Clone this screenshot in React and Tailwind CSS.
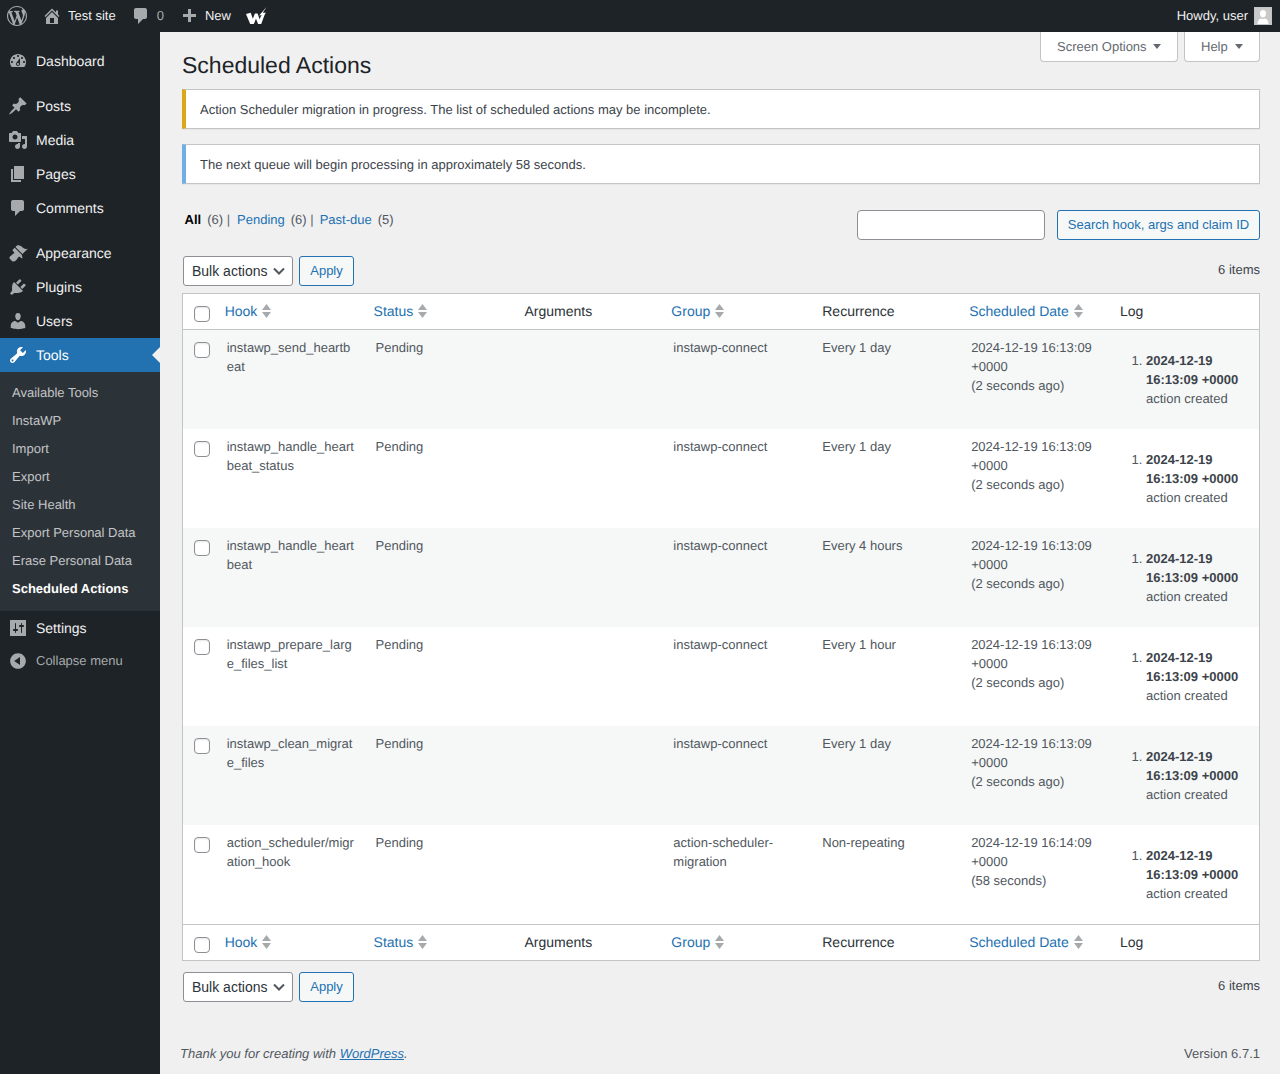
import React from "react";

const P = {
  wp: "M20 10c0-5.51-4.49-10-10-10C4.48 0 0 4.49 0 10c0 5.52 4.48 10 10 10 5.51 0 10-4.48 10-10zM7.78 15.37L4.37 6.22c.55-.02 1.17-.08 1.17-.08.5-.06.44-1.13-.06-1.11 0 0-1.45.11-2.37.11-.18 0-.37 0-.58-.01C4.12 2.69 6.87 1.11 10 1.11c2.33 0 4.45.87 6.05 2.34-.68-.11-1.65.39-1.65 1.58 0 .74.45 1.36.9 2.1.35.61.55 1.36.55 2.46 0 1.49-1.4 5-1.4 5l-3.03-8.37c.54-.02.82-.17.82-.17.5-.05.44-1.25-.06-1.22 0 0-1.44.12-2.38.12-.87 0-2.33-.12-2.33-.12-.5-.03-.56 1.2-.06 1.22l.92.08 1.26 3.41zM17.41 10c.24-.64.74-1.87.43-4.25.7 1.29 1.05 2.71 1.05 4.25 0 3.29-1.73 6.24-4.4 7.78.97-2.59 1.94-5.2 2.92-7.78zM6.1 18.09C3.12 16.65 1.11 13.53 1.11 10c0-1.3.23-2.48.72-3.59C3.25 10.3 4.67 14.2 6.1 18.09zm4.03-6.63l2.58 6.98c-.86.29-1.76.45-2.71.45-.79 0-1.57-.11-2.29-.33.81-2.38 1.62-4.74 2.42-7.1z",
  home: "M16 8.5l1.53 1.53-1.06 1.06L10 4.62l-6.47 6.47-1.06-1.06L10 2.5l4 4v-2h2v4zm-6-2.46l6 5.99V18H4v-5.97zM12 17v-5H8v5h4z",
  comment: "M5 2h9c1.1 0 2 .9 2 2v7c0 1.1-.9 2-2 2h-2l-5 5v-5H5c-1.1 0-2-.9-2-2V4c0-1.1.9-2 2-2z",
  plus: "M17 7v3h-5v5H9v-5H4V7h5V2h3v5h5z",
  dashboard: "M3.76 16h12.48c1.1-1.37 1.76-3.11 1.76-5 0-4.42-3.58-8-8-8s-8 3.58-8 8c0 1.89.66 3.63 1.76 5zM10 4c.55 0 1 .45 1 1s-.45 1-1 1-1-.45-1-1 .45-1 1-1zM6 6c.55 0 1 .45 1 1s-.45 1-1 1-1-.45-1-1 .45-1 1-1zm8 0c.55 0 1 .45 1 1s-.45 1-1 1-1-.45-1-1 .45-1 1-1zm-5.37 5.55L12 7v6c0 1.1-.9 2-2 2s-2-.9-2-2c0-.57.24-1.08.63-1.45zM4 10c.55 0 1 .45 1 1s-.45 1-1 1-1-.45-1-1 .45-1 1-1zm12 0c.55 0 1 .45 1 1s-.45 1-1 1-1-.45-1-1 .45-1 1-1zm-5 3c0-.55-.45-1-1-1s-1 .45-1 1 .45 1 1 1 1-.45 1-1z",
  posts: "M10.44 3.02l1.82-1.82 6.36 6.35-1.83 1.82c-1.05-.68-2.48-.57-3.41.36l-.75.75c-.92.93-1.04 2.35-.35 3.41l-1.83 1.82-2.41-2.41-2.8 2.79c-.42.42-3.38 2.71-3.8 2.29s1.86-3.39 2.28-3.81l2.79-2.79L4.1 9.36l1.83-1.82c1.05.69 2.48.57 3.4-.36l.75-.75c.93-.92 1.05-2.35.36-3.41z",
  media: "M13 11V4c0-.55-.45-1-1-1h-1.67L9 1H5L3.67 3H2c-.55 0-1 .45-1 1v7c0 .55.45 1 1 1h10c.55 0 1-.45 1-1zM7 4.5c1.38 0 2.5 1.12 2.5 2.5S8.38 9.5 7 9.5 4.5 8.38 4.5 7 5.62 4.5 7 4.5zM14 6h5v10.5c0 1.38-1.12 2.5-2.5 2.5S14 17.88 14 16.5s1.12-2.5 2.5-2.5c.17 0 .34.02.5.05V9h-3V6zm-4 8.05V13h2v3.5c0 1.38-1.12 2.5-2.5 2.5S7 17.88 7 16.5 8.12 14 9.5 14c.17 0 .34.02.5.05z",
  pages: "M6 15V2h10v13H6zm-1 1h8v2H3V5h2v11z",
  appearance: "M14.48 11.06L7.41 3.99l1.5-1.5c.5-.56 2.3-.47 3.51.32 1.21.8 1.43 1.28 2.91 2.1 1.18.64 2.45 1.26 4.45.85zm-.71.71L6.7 4.7 4.93 6.47c-.39.39-.39 1.02 0 1.41l1.06 1.06c.39.39.39 1.03 0 1.42-.6.6-1.43 1.11-2.21 1.69-.35.26-.7.53-1.01.84C1.43 13.23.99 15 2.01 16.01l1.98 1.98c1.01 1.02 2.78.58 4.1-.76.3-.3.58-.66.84-1.01.58-.78 1.09-1.61 1.69-2.21.39-.39 1.03-.39 1.42 0l1.06 1.06c.39.39 1.02.39 1.41 0z",
  plugins: "M13.11 4.36L9.87 7.6 8 5.73l3.24-3.24c.35-.34 1.05-.2 1.56.32.52.51.66 1.21.31 1.55zm-8 1.77l.91-1.12 9.01 9.01-1.19.84c-.71.71-2.63 1.16-3.82 1.16H6.14L4.9 17.26c-.59.59-1.54.59-2.12 0-.59-.58-.59-1.53 0-2.12l1.24-1.24v-3.88c0-1.13.4-3.19 1.09-3.89zm7.26 3.97l3.24-3.24c.34-.35 1.04-.21 1.55.31.52.51.66 1.21.31 1.55l-3.24 3.25z",
  users: "M10 9.25c-2.27 0-2.73-3.44-2.73-3.44C7 4.02 7.82 2 9.97 2c2.16 0 2.98 2.02 2.71 3.81 0 0-.41 3.44-2.68 3.44zm0 2.57L12.72 10c2.39 0 4.52 2.33 4.52 4.53v2.49s-3.65 1.13-7.24 1.13c-3.65 0-7.24-1.13-7.24-1.13v-2.49c0-2.25 1.94-4.48 4.47-4.48z",
  tools: "M16.68 9.77c-1.34 1.34-3.3 1.67-4.95.99l-5.41 6.52c-.99.99-2.59.99-3.58 0s-.99-2.59 0-3.57l6.52-5.42c-.68-1.65-.35-3.61.99-4.95 1.28-1.28 3.12-1.62 4.72-1.06l-2.89 2.89 2.82 2.82 2.86-2.87c.53 1.58.18 3.39-1.08 4.65zM3.81 16.21c.4.39 1.04.39 1.43 0 .4-.4.4-1.04 0-1.43-.39-.4-1.03-.4-1.43 0-.39.39-.39 1.03 0 1.43z",
  settings: "M18 18V2H2v16zM8 11h1c.55 0 1 .45 1 1s-.45 1-1 1H8v1.5c0 .28-.22.5-.5.5s-.5-.22-.5-.5V13H6c-.55 0-1-.45-1-1s.45-1 1-1h1V5.5c0-.28.22-.5.5-.5s.5.22.5.5V11zm5-2h-1c-.55 0-1-.45-1-1s.45-1 1-1h1V5.5c0-.28.22-.5.5-.5s.5.22.5.5V7h1c.55 0 1 .45 1 1s-.45 1-1 1h-1v5.5c0 .28-.22.5-.5.5s-.5-.22-.5-.5V9z",
  collapse: "M10 2.16c4.33 0 7.84 3.51 7.84 7.84s-3.51 7.84-7.84 7.84S2.16 14.33 2.16 10 5.71 2.16 10 2.16zm2 11.72V6.12L6.18 9.97z",
};

function Icon({ d, className = "" }) {
  return (
    <svg viewBox="0 0 20 20" fill="currentColor" fillRule="evenodd" className={"w-5 h-5 shrink-0 " + className}>
      <path d={d} />
    </svg>
  );
}

function MenuItem({ icon, label, active }) {
  return (
    <div className={"relative flex items-center h-[34px] pl-2 text-sm " + (active ? "bg-[#2271b1] text-white" : "text-[#f0f0f1]")}>
      <Icon d={icon} className={active ? "text-white" : "text-[#a7aaad]"} />
      <span className="ml-2">{label}</span>
      {active && (
        <span className="absolute right-0 top-[9px] w-0 h-0 border-y-[8px] border-y-transparent border-r-[8px] border-r-[#f0f0f1]" />
      )}
    </div>
  );
}

function Sidebar() {
  const sub = ["Available Tools", "InstaWP", "Import", "Export", "Site Health", "Export Personal Data", "Erase Personal Data"];
  return (
    <aside className="w-40 shrink-0 bg-[#1d2327] pt-3">
      <MenuItem icon={P.dashboard} label="Dashboard" />
      <div className="h-[11px]" />
      <MenuItem icon={P.posts} label="Posts" />
      <MenuItem icon={P.media} label="Media" />
      <MenuItem icon={P.pages} label="Pages" />
      <MenuItem icon={P.comment} label="Comments" />
      <div className="h-[11px]" />
      <MenuItem icon={P.appearance} label="Appearance" />
      <MenuItem icon={P.plugins} label="Plugins" />
      <MenuItem icon={P.users} label="Users" />
      <MenuItem icon={P.tools} label="Tools" active />
      <div className="bg-[#2c3338] pt-[7px] pb-2 text-[13px]">
        {sub.map((s) => (
          <div key={s} className="h-7 flex items-center pl-3 text-[#c3c4c7]">{s}</div>
        ))}
        <div className="h-7 flex items-center pl-3 text-white font-semibold">Scheduled Actions</div>
      </div>
      <MenuItem icon={P.settings} label="Settings" />
      <div className="flex items-center h-8 pl-2 text-[13px] text-[#a7aaad]">
        <Icon d={P.collapse} />
        <span className="ml-2">Collapse menu</span>
      </div>
    </aside>
  );
}

function TopBar() {
  return (
    <header className="h-8 bg-[#1d2327] flex items-center text-[13px] text-[#f0f0f1]">
      <Icon d={P.wp} className="ml-[7px] text-[#a7aaad]" />
      <Icon d={P.home} className="ml-[15px] text-[#a7aaad]" />
      <span className="ml-[6px]">Test site</span>
      <Icon d={P.comment} className="ml-[15px] text-[#a7aaad]" />
      <span className="ml-[6px] text-[#a7aaad]">0</span>
      <Icon d={P.plus} className="ml-[15px] text-[#a7aaad] mt-[2px]" />
      <span className="ml-[6px]">New</span>
      <svg viewBox="0 0 20 17" className="ml-[15px] w-[21px] h-[18px] fill-white">
        <path d="M0 6.500L4.500 5.500L6.500 11L8.500 6L11 6L13 11.500L14.500 8L18 6.500L14.500 16L11.500 16L9.500 11L7.500 16L4 16Z" />
        <path d="M19.500 0L12.500 8L15.500 7.500L13.500 12.500L19 5.500L16 5.500Z" />
      </svg>
      <span className="ml-auto">Howdy, user</span>
      <span className="ml-[6px] mr-2 w-[18px] h-[18px] border border-[#c3c4c7] overflow-hidden flex items-end justify-center bg-[#c9c9c9]">
        <svg viewBox="0 0 16 16" className="w-4 h-4 fill-white">
          <path d="M8 2c2 0 3 1.6 3 3.4S10 9.5 8 9.5 5 7.200 5 5.400 6 2 8 2zM2.500 16c0-3.500 1.500-5 3.500-5.500 1.300.7 2.700.7 4 0 2 .5 3.500 2 3.500 5.500z" />
        </svg>
      </span>
    </header>
  );
}

function Triangle() {
  return <span className="w-0 h-0 border-x-[4px] border-x-transparent border-t-[5px] border-t-[#646970]" />;
}

function TabButton({ label, className, gap }) {
  return (
    <div className={"h-[30px] flex items-center bg-white border-x border-b border-[#c3c4c7] rounded-b-[4px] text-[13px] text-[#646970] " + className}>
      <span>{label}</span>
      <span className={"flex " + gap}><Triangle /></span>
    </div>
  );
}

function Notice({ color, children }) {
  return (
    <div className={"h-10 flex items-center bg-white border border-[#c3c4c7] border-l-4 pl-[14px] pt-[2px] text-[13px] text-[#3c434a] shadow-[0_1px_1px_rgba(0,0,0,0.04)] " + color}>
      {children}
    </div>
  );
}

function Bulk() {
  return (
    <div className="flex items-center justify-between h-[30px]">
      <div className="flex gap-[6px]">
        <div className="relative w-[110px] h-[30px]">
          <select className="appearance-none w-full h-full bg-white border border-[#8c8f94] rounded-[3px] pl-2 text-sm text-[#2c3338]">
            <option>Bulk actions</option>
          </select>
          <svg viewBox="0 0 20 20" className="absolute right-[4px] top-[5px] w-5 h-5 pointer-events-none" fill="none" stroke="#50575e" strokeWidth="2">
            <path d="M5 7.500l5 5 5-5" />
          </svg>
        </div>
        <button className="w-[55px] h-[30px] bg-[#f6f7f7] border border-[#2271b1] rounded-[3px] text-[13px] text-[#2271b1]">Apply</button>
      </div>
      <span className="text-[13px] text-[#3c434a] -mt-[2px]">6 items</span>
    </div>
  );
}

function Sort() {
  return (
    <svg viewBox="0 0 9 14" className="w-[9px] h-[14px] ml-[5px] fill-[#a7aaad] shrink-0">
      <path d="M4.500 0L9 6H0z" />
      <path d="M0 8h9l-4.500 6z" />
    </svg>
  );
}

const Check = ({ className = "" }) => (
  <input
    type="checkbox"
    className={"block appearance-none w-4 h-4 bg-white border border-[#8c8f94] rounded-[4px] shadow-[inset_0_1px_2px_rgba(0,0,0,0.1)] " + className}
  />
);

function HeadRow({ footer }) {
  const b = footer ? "border-t" : "border-b";
  const th = "h-[36px] p-0 border-[#c3c4c7] font-normal text-left text-sm align-middle " + b;
  const Link = ({ t }) => (
    <th className={th + " pl-2"}>
      <div className="flex items-center -mt-[2px]">
        <a className="text-[#2271b1]">{t}</a>
        <Sort />
      </div>
    </th>
  );
  const Plain = ({ t }) => (
    <th className={th + " pl-[10px] text-[#2c3338]"}>
      <div className="-mt-[2px]">{t}</div>
    </th>
  );
  return (
    <tr className="bg-white">
      <th className={th + " pl-[11px]"}>
        <Check className={"relative top-[2px]"} />
      </th>
      <Link t="Hook" />
      <Link t="Status" />
      <Plain t="Arguments" />
      <Link t="Group" />
      <Plain t="Recurrence" />
      <Link t="Scheduled Date" />
      <Plain t="Log" />
    </tr>
  );
}

const rows = [
  ["instawp_send_heartbeat", "instawp-connect", "Every 1 day", "2024-12-19 16:13:09", "(2 seconds ago)"],
  ["instawp_handle_heartbeat_status", "instawp-connect", "Every 1 day", "2024-12-19 16:13:09", "(2 seconds ago)"],
  ["instawp_handle_heartbeat", "instawp-connect", "Every 4 hours", "2024-12-19 16:13:09", "(2 seconds ago)"],
  ["instawp_prepare_large_files_list", "instawp-connect", "Every 1 hour", "2024-12-19 16:13:09", "(2 seconds ago)"],
  ["instawp_clean_migrate_files", "instawp-connect", "Every 1 day", "2024-12-19 16:13:09", "(2 seconds ago)"],
  ["action_scheduler/migration_hook", "action-scheduler-migration", "Non-repeating", "2024-12-19 16:14:09", "(58 seconds)"],
];

function Table() {
  const td = "px-[10px] py-2 align-top";
  return (
    <table className="w-full table-fixed border-separate border-spacing-0 border border-[#c3c4c7] text-[13px] leading-[19px] text-[#50575e]">
      <colgroup>
        <col className="w-[33.7px]" />
        <col /><col /><col /><col /><col /><col /><col />
      </colgroup>
      <thead><HeadRow /></thead>
      <tbody>
        {rows.map((r, i) => (
          <tr key={i} className={"h-[99px] " + (i % 2 === 0 ? "bg-[#f6f7f7]" : "bg-white")}>
            <td className="pl-[11px] pt-3 align-top"><Check /></td>
            <td className={td + " break-all"}>{r[0]}</td>
            <td className={td}>Pending</td>
            <td className={td}></td>
            <td className={td}>{r[1]}</td>
            <td className={td}>{r[2]}</td>
            <td className={td}>{r[3]}<br />+0000<br />{r[4]}</td>
            <td className={td}>
              <ol className="list-decimal ml-[26px] my-[13px]">
                <li><strong className="text-[#3c434a]">2024-12-19 16:13:09 +0000</strong><br />action created</li>
              </ol>
            </td>
          </tr>
        ))}
      </tbody>
      <tfoot><HeadRow footer /></tfoot>
    </table>
  );
}

export default function App() {
  return (
    <div className="min-h-[1074px] flex flex-col overflow-hidden bg-[#f0f0f1] [text-rendering:geometricPrecision] font-['Liberation_Sans',Arial,sans-serif]">
      <TopBar />
      <div className="flex flex-1">
        <Sidebar />
        <main className="flex-1 min-w-0 pl-5 pr-5">
          <div className="ml-[2px]">
            <div className="flex justify-between items-start h-[57px]">
              <h1 className="pt-[18px] text-[23px] leading-[30px] font-normal text-[#1d2327]">Scheduled Actions</h1>
              <div className="flex gap-[6px]">
                <TabButton label="Screen Options" className="w-[138px] pl-4" gap="ml-[6px]" />
                <TabButton label="Help" className="w-[76px] pl-4" gap="ml-[7px]" />
              </div>
            </div>
            <Notice color="border-l-[#dba617]">Action Scheduler migration in progress. The list of scheduled actions may be incomplete.</Notice>
            <div className="mt-[15px]">
              <Notice color="border-l-[#72aee6]">The next queue will begin processing in approximately 58 seconds.</Notice>
            </div>
            <div className="mt-[26px] h-[30px] flex justify-between items-start">
              <div className="text-[13px] leading-[19px] text-[#50575e] ml-[2.500px]">
                <strong className="text-black">All</strong>
                <span className="ml-[6px]">(6)</span> <span className="text-[#646970]">|</span>
                <a className="ml-[7px] text-[#2271b1]">Pending</a>
                <span className="ml-[6px]">(6)</span> <span className="text-[#646970]">|</span>
                <a className="ml-[6px] text-[#2271b1]">Past-due</a>
                <span className="ml-[6px]">(5)</span>
              </div>
              <div className="flex gap-3">
                <input className="w-[188px] h-[30px] bg-white border border-[#8c8f94] rounded-[4px]" />
                <button className="w-[203px] h-[30px] bg-[#f6f7f7] border border-[#2271b1] rounded-[3px] text-[13px] text-[#2271b1]">Search hook, args and claim ID</button>
              </div>
            </div>
            <div className="mt-4 pl-px"><Bulk /></div>
            <div className="mt-[7px]"><Table /></div>
            <div className="mt-[11px] pl-px"><Bulk /></div>
          </div>
          <footer className="mt-[42px] h-5 flex justify-between items-center text-[13px] text-[#50575e]">
            <span className="italic">Thank you for creating with <a className="text-[#2271b1] underline">WordPress</a>.</span>
            <span>Version 6.7.1</span>
          </footer>
        </main>
      </div>
    </div>
  );
}
